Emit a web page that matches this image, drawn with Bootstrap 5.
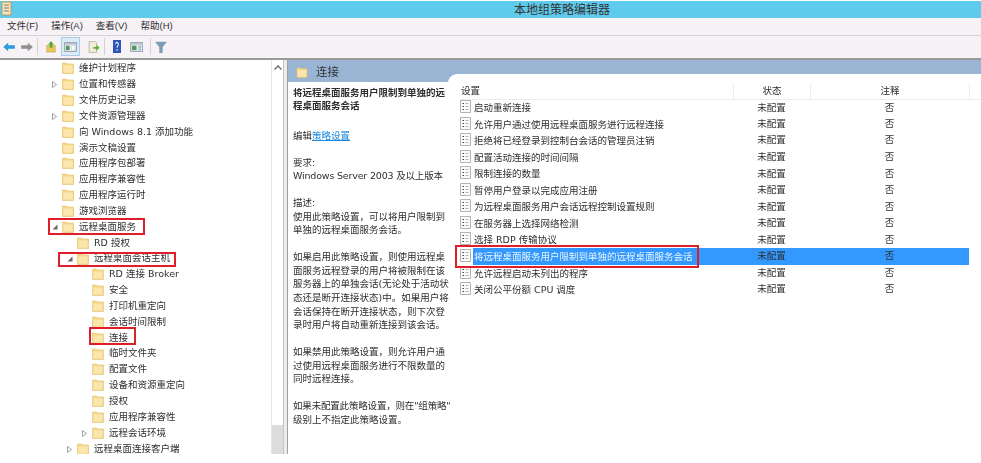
<!DOCTYPE html>
<html lang="zh-CN">
<head>
    <meta charset="UTF-8">
    <title>本地组策略编辑器</title>
    <link href="https://cdn.jsdelivr.net/npm/bootstrap@5.3.0/dist/css/bootstrap.min.css" rel="stylesheet">
    <style>
        html, body { height: 100%; background: #fff; overflow: hidden; }
        body { font-family: "DejaVu Sans", "Noto Sans CJK SC", sans-serif; font-size: 9.5px; color: #2e2e2e; }
        .gp-window { width: 981px; height: 454px; padding-top: 1px; filter: blur(0.5px); }
        .gp-title { height: 17px; background: #5fcbec; font-size: 12px; color: #333; padding-left: 143px; }
        .gp-title svg { position: absolute; left: 1px; top: 0; }
        .gp-menu { height: 18px; background: #f6f2f6; border-bottom: 1px solid #d4d2d4; padding-left: 7px; gap: 13px; font-family: "Liberation Sans", "Noto Sans CJK SC", sans-serif; font-size: 9.5px; }
        .gp-tools { height: 25px; background: #f6f2f6; border-bottom: 2px solid #9a9a9a; padding-left: 3px; }
        .gp-tools svg { display: block; flex: none; }
        .tool-sep { width: 1px; height: 17px; background: #d2d2d2; flex: none; }
        .tool-on { width: 19px; height: 19px; background: #dcebf8; border: 1px solid #a9cde8; margin-left: 5px; }
        .m6 { margin-left: 6px; }
        .m9 { margin-left: 9px; }
        .m7 { margin-left: 7px; }
        .gp-main { height: 394px; }
        .gp-tree { width: 271px; padding-top: 0.5px; overflow: hidden; }
        .tree-row { height: 15.85px; white-space: nowrap; position: relative; }
        .tree-row svg.fold { margin-right: 5px; flex: none; }
        .d0 { padding-left: 62px; }
        .d1 { padding-left: 77px; }
        .d2 { padding-left: 92px; }
        .twist { position: absolute; top: 5px; }
        .tw-a { left: 52px; }
        .tw-b { left: 67px; }
        .tw-c { left: 82px; }
        .gp-scroll { width: 12px; background: #fff; border-left: 1px solid #e4e4e4; }
        .scroll-up { height: 15px; font-size: 0; }
        .scroll-track { height: 350px; }
        .scroll-thumb { height: 29px; background: #dcdcdc; }
        .gp-split { width: 5px; background: #ececec; border-left: 1px solid #c4c4c4; border-right: 1px solid #a0a0a0; }
        .gp-pane { width: 693px; position: relative; }
        .pane-head { height: 22px; background: #9ab5d3; padding: 3px 0 0 8px; font-size: 11.5px; color: #333; }
        .pane-head svg { margin-right: 8px; }
        .pane-body { height: 372px; }
        .gp-desc { width: 160px; padding: 3.5px 0 0 5px; line-height: 13.6px; flex: none; white-space: nowrap; }
        .gp-desc p { margin: 0 0 13.3px; }
        .gp-desc a { color: #1a88e0; }
        .tight { letter-spacing: -0.18px; }
        .gp-list { flex: 1; position: relative; padding: 1.7px 12px 0 12px; }
        .gp-list::before { content: ""; position: absolute; left: 0; top: -8px; right: 0; height: 14px; background: #fff; border-top-left-radius: 9px; }
        .gp-table { position: relative; width: 520px; table-layout: fixed; border-collapse: collapse; font-size: 9.5px; color: #2e2e2e; }
        .c1 { width: 273px; }
        .c2 { width: 77px; }
        .c3 { width: 159px; }
        .gp-table th { height: 15.5px; font-weight: 400; padding: 0 0 0 1px; border-bottom: 1px solid #ededed; }
        .gp-table th + th { border-left: 1px solid #ededed; text-align: center; }
        .gp-table td { height: 16.55px; padding: 0; white-space: nowrap; }
        .gp-table td + td { text-align: center; }
        .gp-table td svg { vertical-align: -2.5px; margin-right: 3px; }
        .row-picked td { background: #3399ff; }
        .row-picked td:first-child { color: #e9f3ff; background: linear-gradient(90deg, #fff 13px, #3399ff 13px); }
        .row-picked td:last-child { background: #fff; }
        .row-picked svg { background: #a8cdf2; }
        .red-box { position: absolute; border: 2px solid #e01e2a; pointer-events: none; }
        .rb-1 { left: 48px; top: 218px; width: 97px; height: 17px; }
        .rb-2 { left: 58px; top: 252px; width: 118px; height: 15px; }
        .rb-3 { left: 89px; top: 327px; width: 47px; height: 18px; }
        .rb-4 { left: 455px; top: 245px; width: 244px; height: 23px; }
    </style>
</head>
<body>
    <svg width="0" height="0" class="position-absolute">
        <symbol id="folder" viewBox="0 0 12 12">
            <path d="M.5 1h4l1 1h6v9.500H.5z" fill="#f5d888" stroke="#e2c36e" stroke-width=".6"/>
            <path d="M1.500 3.500h9v7h-9z" fill="#fbe7ad"/>
        </symbol>
        <symbol id="doc" viewBox="0 0 11 13">
            <path d="M.5.5h10v12H.5z" fill="#fbfbfb" stroke="#b4b4b4"/>
            <path d="M2.500 3.500h1.500M2.500 6.500h1.500M2.500 9.500h1.500" stroke="#444" stroke-width="1.200"/>
            <path d="M5.500 3.500h3M5.500 6.500h3M5.500 9.500h3" stroke="#b4b4b4"/>
        </symbol>
        <symbol id="tw-right" viewBox="0 0 5 7">
            <path d="M.5.500l4 3-4 3z" fill="#fff" stroke="#8a8a8a" stroke-width=".8"/>
        </symbol>
        <symbol id="tw-down" viewBox="0 0 6 6">
            <path d="M5.500.500v5h-5z" fill="#666"/>
        </symbol>
    </svg>

    <div class="gp-window position-relative d-flex flex-column">
        <div class="gp-title position-relative d-flex align-items-center justify-content-center">
            <svg width="11" height="15" viewBox="0 0 11 15"><path d="M1 1h9v13H1z" fill="#f4e7bf" stroke="#b59a5c"/><path d="M3 4h5M3 7h5M3 10h5" stroke="#8b7a50"/></svg>
            本地组策略编辑器
        </div>

        <div class="gp-menu d-flex align-items-center">
            <span>文件(F)</span><span>操作(A)</span><span>查看(V)</span><span>帮助(H)</span>
        </div>

        <div class="gp-tools d-flex align-items-center">
            <svg width="12" height="10" viewBox="0 0 14 12"><path d="M0 6l6-5v3h8v4H6v3z" fill="#2f9be0"/></svg>
            <svg class="m6" width="12" height="10" viewBox="0 0 14 12"><path d="M14 6L8 1v3H0v4h8v3z" fill="#8f8f8f"/></svg>
            <span class="tool-sep ms-1"></span>
            <svg class="ms-2" width="10" height="12" viewBox="0 0 14 14" preserveAspectRatio="none"><path d="M1 5h12v8H1z" fill="#e8c65a" stroke="#b99a3a" stroke-width=".6"/><path d="M7 0l4 4H9v4H5V4H3z" fill="#5ba83a"/></svg>
            <span class="tool-on d-flex align-items-center justify-content-center">
                <svg width="13" height="10" viewBox="0 0 14 11"><path d="M.5.500h13v10H.5z" fill="#e9eef2" stroke="#8c9aa6"/><path d="M1 1h12v2H1z" fill="#b9c6d2"/><path d="M2 4h4v5H2z" fill="#4e9a5e"/><path d="M8 4h4v5H8z" fill="#fff" stroke="#b9c6d2" stroke-width=".5"/></svg>
            </span>
            <svg class="ms-2" width="12" height="12" viewBox="0 0 16 14" preserveAspectRatio="none"><path d="M1.500.500h8l2 2V13.500h-10z" fill="#f2ecdc" stroke="#b5ad98"/><path d="M7 7h4V4.500L15.500 8 11 11.500V9H7z" fill="#5fb32e"/></svg>
            <span class="tool-sep ms-1"></span>
            <svg class="ms-2" width="8" height="13" viewBox="0 0 12 15" preserveAspectRatio="none"><path d="M0 0h12v15H0z" fill="#2d55b8"/><path d="M4 5c0-3 4-3 4 0 0 2-2 2-2 4M6 10.500v2" stroke="#fff" stroke-width="1.400" fill="none"/></svg>
            <svg class="m9" width="13" height="10" viewBox="0 0 14 11"><path d="M.5.500h13v10H.5z" fill="#e9eef2" stroke="#8c9aa6"/><path d="M1 1h12v2H1z" fill="#b9c6d2"/><path d="M2 4h5v5H2z" fill="#4e9a5e"/><path d="M9 4.500h3M9 6.500h3M9 8.500h3" stroke="#8c9aa6"/></svg>
            <span class="tool-sep m7"></span>
            <svg class="ms-1" width="12" height="12" viewBox="0 0 14 14"><path d="M0 1h14L9 7v7H5V7z" fill="#7d9db5"/></svg>
        </div>

        <div class="gp-main d-flex">
            <div class="gp-tree">
                <div class="tree-row d0 d-flex align-items-center"><svg class="fold" width="12" height="12"><use href="#folder"/></svg>维护计划程序</div>
                <div class="tree-row d0 d-flex align-items-center"><svg class="twist tw-a" width="5" height="7"><use href="#tw-right"/></svg><svg class="fold" width="12" height="12"><use href="#folder"/></svg>位置和传感器</div>
                <div class="tree-row d0 d-flex align-items-center"><svg class="fold" width="12" height="12"><use href="#folder"/></svg>文件历史记录</div>
                <div class="tree-row d0 d-flex align-items-center"><svg class="twist tw-a" width="5" height="7"><use href="#tw-right"/></svg><svg class="fold" width="12" height="12"><use href="#folder"/></svg>文件资源管理器</div>
                <div class="tree-row d0 d-flex align-items-center"><svg class="fold" width="12" height="12"><use href="#folder"/></svg>向 Windows 8.1 添加功能</div>
                <div class="tree-row d0 d-flex align-items-center"><svg class="fold" width="12" height="12"><use href="#folder"/></svg>演示文稿设置</div>
                <div class="tree-row d0 d-flex align-items-center"><svg class="fold" width="12" height="12"><use href="#folder"/></svg>应用程序包部署</div>
                <div class="tree-row d0 d-flex align-items-center"><svg class="fold" width="12" height="12"><use href="#folder"/></svg>应用程序兼容性</div>
                <div class="tree-row d0 d-flex align-items-center"><svg class="fold" width="12" height="12"><use href="#folder"/></svg>应用程序运行时</div>
                <div class="tree-row d0 d-flex align-items-center"><svg class="fold" width="12" height="12"><use href="#folder"/></svg>游戏浏览器</div>
                <div class="tree-row d0 d-flex align-items-center"><svg class="twist tw-a" width="6" height="6"><use href="#tw-down"/></svg><svg class="fold" width="12" height="12"><use href="#folder"/></svg>远程桌面服务</div>
                <div class="tree-row d1 d-flex align-items-center"><svg class="fold" width="12" height="12"><use href="#folder"/></svg>RD 授权</div>
                <div class="tree-row d1 d-flex align-items-center"><svg class="twist tw-b" width="6" height="6"><use href="#tw-down"/></svg><svg class="fold" width="12" height="12"><use href="#folder"/></svg>远程桌面会话主机</div>
                <div class="tree-row d2 d-flex align-items-center"><svg class="fold" width="12" height="12"><use href="#folder"/></svg>RD 连接 Broker</div>
                <div class="tree-row d2 d-flex align-items-center"><svg class="fold" width="12" height="12"><use href="#folder"/></svg>安全</div>
                <div class="tree-row d2 d-flex align-items-center"><svg class="fold" width="12" height="12"><use href="#folder"/></svg>打印机重定向</div>
                <div class="tree-row d2 d-flex align-items-center"><svg class="fold" width="12" height="12"><use href="#folder"/></svg>会话时间限制</div>
                <div class="tree-row d2 d-flex align-items-center"><svg class="fold" width="12" height="12"><use href="#folder"/></svg>连接</div>
                <div class="tree-row d2 d-flex align-items-center"><svg class="fold" width="12" height="12"><use href="#folder"/></svg>临时文件夹</div>
                <div class="tree-row d2 d-flex align-items-center"><svg class="fold" width="12" height="12"><use href="#folder"/></svg>配置文件</div>
                <div class="tree-row d2 d-flex align-items-center"><svg class="fold" width="12" height="12"><use href="#folder"/></svg>设备和资源重定向</div>
                <div class="tree-row d2 d-flex align-items-center"><svg class="fold" width="12" height="12"><use href="#folder"/></svg>授权</div>
                <div class="tree-row d2 d-flex align-items-center"><svg class="fold" width="12" height="12"><use href="#folder"/></svg>应用程序兼容性</div>
                <div class="tree-row d2 d-flex align-items-center"><svg class="twist tw-c" width="5" height="7"><use href="#tw-right"/></svg><svg class="fold" width="12" height="12"><use href="#folder"/></svg>远程会话环境</div>
                <div class="tree-row d1 d-flex align-items-center"><svg class="twist tw-b" width="5" height="7"><use href="#tw-right"/></svg><svg class="fold" width="12" height="12"><use href="#folder"/></svg>远程桌面连接客户端</div>
            </div>

            <div class="gp-scroll">
                <div class="scroll-up d-flex align-items-center justify-content-center">
                    <svg width="8" height="5" viewBox="0 0 8 5"><path d="M.5 4.500L4 1l3.500 3.500" stroke="#666" stroke-width="1.300" fill="none"/></svg>
                </div>
                <div class="scroll-track"></div>
                <div class="scroll-thumb"></div>
            </div>

            <div class="gp-split"></div>

            <div class="gp-pane">
                <div class="pane-head d-flex align-items-center">
                    <svg width="12" height="11"><use href="#folder"/></svg>连接
                </div>
                <div class="pane-body d-flex">
                    <div class="gp-desc">
                        <p><b>将远程桌面服务用户限制到单独的远<br>程桌面服务会话</b></p>
                        <p class="mt-3">编辑<a href="#">策略设置</a></p>
                        <p>要求:<br><span class="tight">Windows Server 2003 及以上版本</span></p>
                        <p>描述:<br>使用此策略设置，可以将用户限制到<br>单独的远程桌面服务会话。</p>
                        <p>如果启用此策略设置，则使用远程桌<br>面服务远程登录的用户将被限制在该<br>服务器上的单独会话(无论处于活动状<br>态还是断开连接状态)中。如果用户将<br>会话保持在断开连接状态，则下次登<br>录时用户将自动重新连接到该会话。</p>
                        <p>如果禁用此策略设置，则允许用户通<br>过使用远程桌面服务进行不限数量的<br>同时远程连接。</p>
                        <p><span class="tight">如果未配置此策略设置，则在"组策略"</span><br>级别上不指定此策略设置。</p>
                    </div>
                    <div class="gp-list">
                        <table class="gp-table">
                            <colgroup><col class="c1"><col class="c2"><col class="c3"><col></colgroup>
                            <thead><tr><th>设置</th><th>状态</th><th>注释</th><th></th></tr></thead>
                            <tbody>
                                <tr><td><svg width="11" height="13"><use href="#doc"/></svg>启动重新连接</td><td>未配置</td><td>否</td><td></td></tr>
                                <tr><td><svg width="11" height="13"><use href="#doc"/></svg>允许用户通过使用远程桌面服务进行远程连接</td><td>未配置</td><td>否</td><td></td></tr>
                                <tr><td><svg width="11" height="13"><use href="#doc"/></svg>拒绝将已经登录到控制台会话的管理员注销</td><td>未配置</td><td>否</td><td></td></tr>
                                <tr><td><svg width="11" height="13"><use href="#doc"/></svg>配置活动连接的时间间隔</td><td>未配置</td><td>否</td><td></td></tr>
                                <tr><td><svg width="11" height="13"><use href="#doc"/></svg>限制连接的数量</td><td>未配置</td><td>否</td><td></td></tr>
                                <tr><td><svg width="11" height="13"><use href="#doc"/></svg>暂停用户登录以完成应用注册</td><td>未配置</td><td>否</td><td></td></tr>
                                <tr><td><svg width="11" height="13"><use href="#doc"/></svg>为远程桌面服务用户会话远程控制设置规则</td><td>未配置</td><td>否</td><td></td></tr>
                                <tr><td><svg width="11" height="13"><use href="#doc"/></svg>在服务器上选择网络检测</td><td>未配置</td><td>否</td><td></td></tr>
                                <tr><td><svg width="11" height="13"><use href="#doc"/></svg>选择 RDP 传输协议</td><td>未配置</td><td>否</td><td></td></tr>
                                <tr class="row-picked"><td><svg width="11" height="13"><use href="#doc"/></svg>将远程桌面服务用户限制到单独的远程桌面服务会话</td><td>未配置</td><td>否</td><td></td></tr>
                                <tr><td><svg width="11" height="13"><use href="#doc"/></svg>允许远程启动未列出的程序</td><td>未配置</td><td>否</td><td></td></tr>
                                <tr><td><svg width="11" height="13"><use href="#doc"/></svg>关闭公平份额 CPU 调度</td><td>未配置</td><td>否</td><td></td></tr>
                            </tbody>
                        </table>
                    </div>
                </div>
            </div>
        </div>

        <div class="red-box rb-1"></div>
        <div class="red-box rb-2"></div>
        <div class="red-box rb-3"></div>
        <div class="red-box rb-4"></div>
    </div>

    <script src="https://cdn.jsdelivr.net/npm/bootstrap@5.3.0/dist/js/bootstrap.bundle.min.js"></script>
</body>
</html>
